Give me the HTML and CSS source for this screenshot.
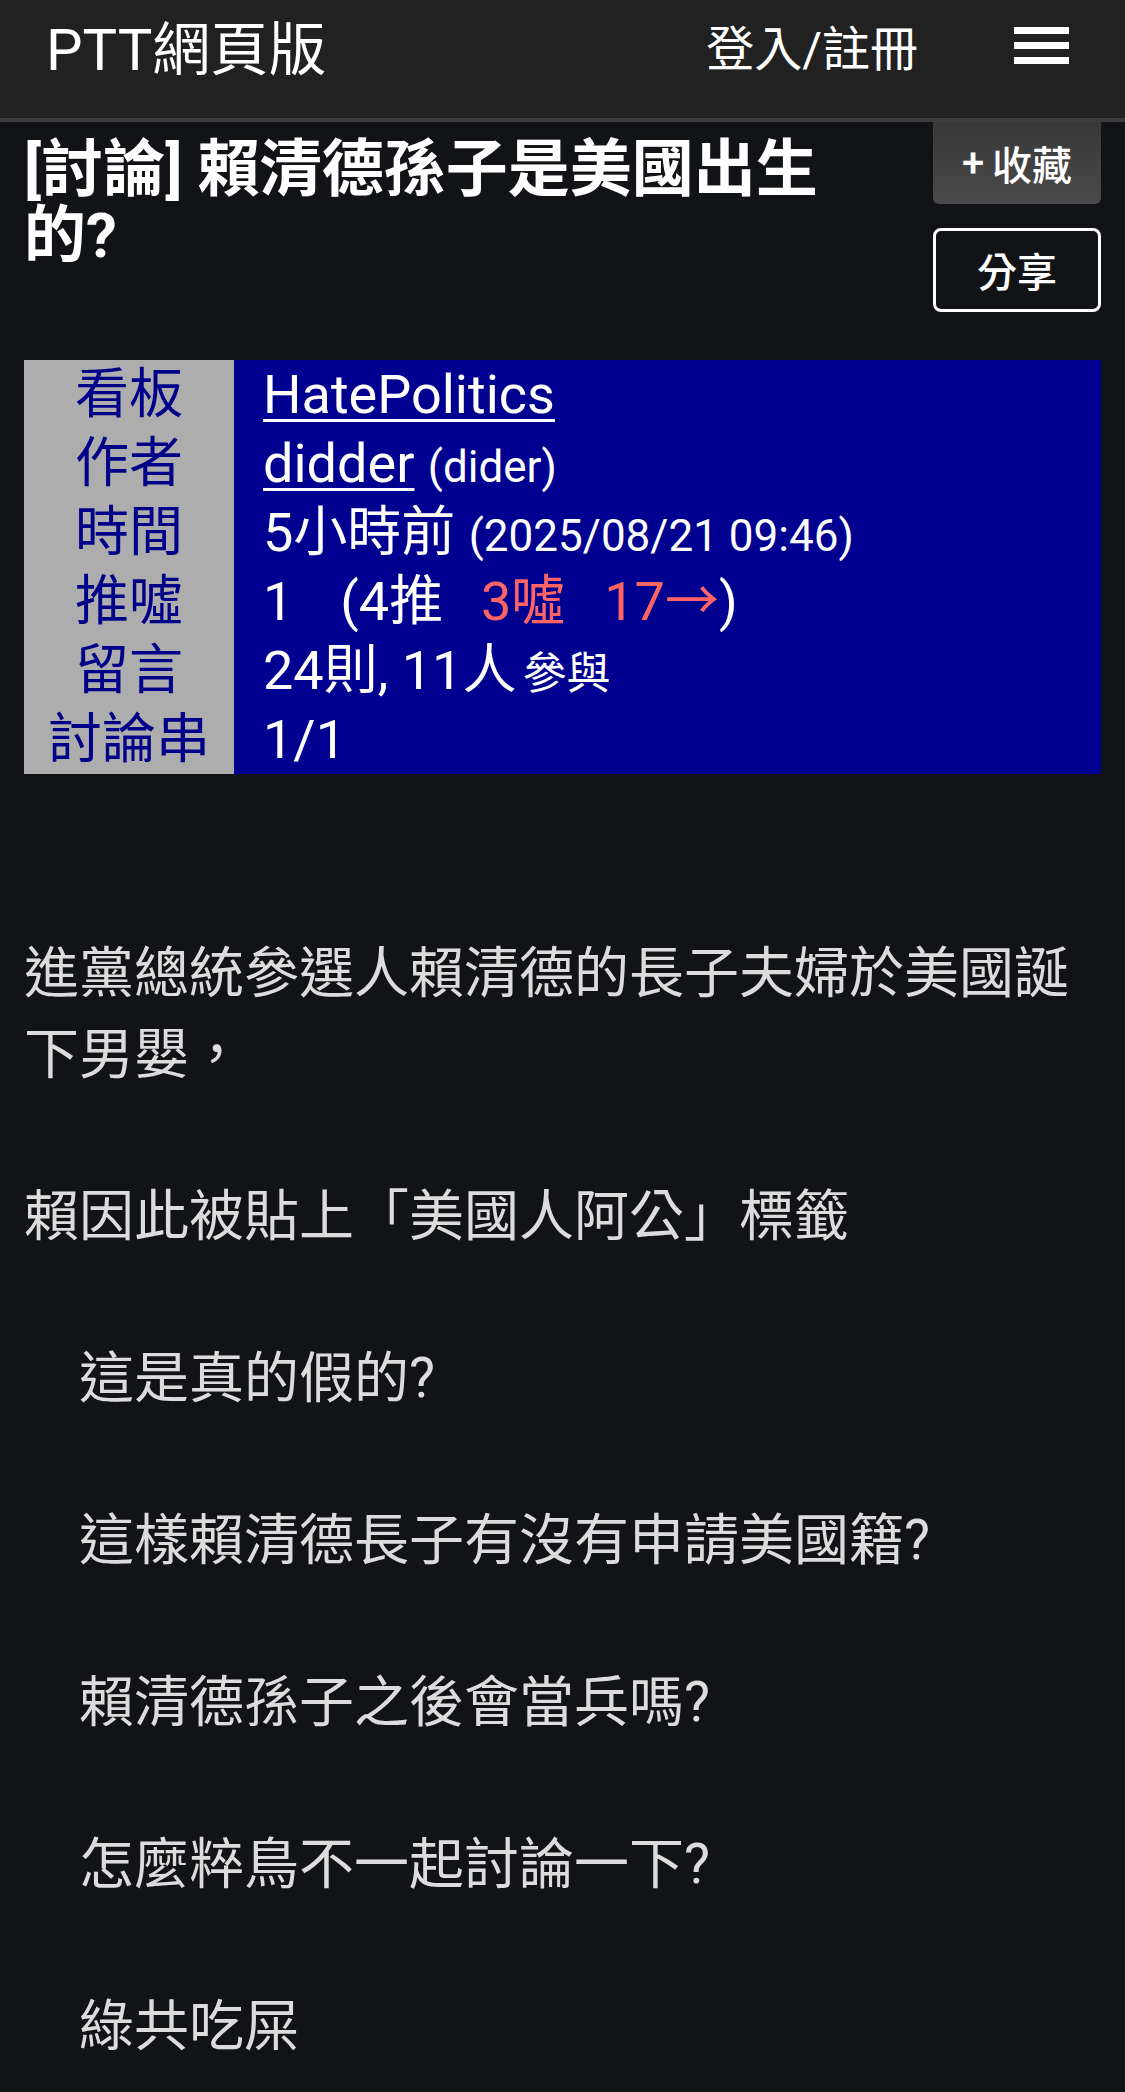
FILE: index.html
```html
<!DOCTYPE html>
<html lang="zh-Hant">
<head>
<meta charset="utf-8">
<title>PTT網頁版</title>
<link rel="stylesheet" href="styles.css">
</head>
<body>
<header class="topbar">
  <div class="brand">PTT網頁版</div>
  <div class="actions">
    <span class="login">登入/註冊</span>
    <svg class="menu" width="55" height="37" viewBox="0 0 55 37" aria-label="選單">
      <rect x="0" y="0" width="55" height="7" fill="#fff"/>
      <rect x="0" y="15" width="55" height="7" fill="#fff"/>
      <rect x="0" y="30" width="55" height="7" fill="#fff"/>
    </svg>
  </div>
</header>
<main class="page">
  <section class="article-head">
    <h1 class="title">[討論] 賴清德孫子是美國出生的?</h1>
    <div class="btns">
      <div class="btn fav"><span class="plus">+</span>收藏</div>
      <div class="btn share">分享</div>
    </div>
  </section>
  <div class="meta">
    <div class="label">看板</div>
    <div class="value"><span class="link">HatePolitics</span></div>
    <div class="label">作者</div>
    <div class="value"><span class="link">didder</span> <span class="small">(dider)</span></div>
    <div class="label">時間</div>
    <div class="value">5小時前 <span class="small">(2025/08/21 09:46)</span></div>
    <div class="label">推噓</div>
    <div class="value">1<span class="paren">(4推</span><span class="boo">3噓</span><span class="boo arrow">17→</span>)</div>
    <div class="label">留言</div>
    <div class="value">24則, 11人<span class="small join">參與</span></div>
    <div class="label">討論串</div>
    <div class="value">1/1</div>
  </div>
  <div class="content">進黨總統參選人賴清德的長子夫婦於美國誕下男嬰，

賴因此被貼上「美國人阿公」標籤

　這是真的假的?

　這樣賴清德長子有沒有申請美國籍?

　賴清德孫子之後會當兵嗎?

　怎麼粹鳥不一起討論一下?

　綠共吃屎</div>
</main>
</body>
</html>
```

FILE: styles.css
```css
* {
  box-sizing: border-box;
}

html, body {
  margin: 0;
  padding: 0;
}

body {
  background: #121316;
  color: #fff;
  font-family: Roboto, "Noto Sans CJK TC", "Noto Sans", sans-serif;
}

.topbar {
  height: 122px;
  background: #212121;
  border-bottom: 4px solid #3c3c3c;
  display: flex;
  align-items: center;
  justify-content: space-between;
  padding: 0 56px 18px 46px;
}

.brand {
  font-size: 58px;
  line-height: 58px;
  color: #fff;
}

.actions {
  display: flex;
  align-items: center;
  gap: 96px;
}

.login {
  font-size: 48px;
  line-height: 48px;
  color: #fff;
}

.menu {
  display: block;
  margin-bottom: 10px;
}

.page {
  padding: 0 24px;
}

.article-head {
  display: flex;
  align-items: flex-start;
  justify-content: space-between;
}

.title {
  flex: 0 0 850px;
  margin: 15px 0 0 0;
  font-size: 62px;
  line-height: 66px;
  font-weight: 700;
  color: #fff;
}

.btns {
  width: 168px;
  display: flex;
  flex-direction: column;
  gap: 24px;
}

.btn {
  display: flex;
  align-items: center;
  justify-content: center;
  font-size: 40px;
  font-weight: 500;
  color: #fff;
}

.plus {
  margin-right: 8px;
}

.fav {
  height: 82px;
  background: linear-gradient(#383838, #4a4a4a);
  border-radius: 0 0 6px 6px;
}

.share {
  height: 84px;
  border: 3px solid #fff;
  border-radius: 8px;
}

.meta {
  margin-top: 48px;
  display: grid;
  grid-template-columns: 210px 1fr;
  grid-auto-rows: 69px;
  font-size: 54px;
  line-height: 69px;
}

.label {
  background: #adadad;
  color: #000088;
  text-align: center;
  overflow: hidden;
}

.value {
  background: #000090;
  color: #fff;
  padding-left: 29px;
  white-space: nowrap;
  overflow: hidden;
}

.link {
  text-decoration: underline;
  text-decoration-thickness: 3px;
  text-underline-offset: 6px;
}

.small {
  font-size: 44px;
  line-height: 1;
}

.join {
  margin-left: 6px;
}

.paren {
  margin-left: 0.87em;
}

.boo {
  color: #ff6464;
  margin-left: 0.7em;
}

.boo.arrow {
  margin-left: 0.72em;
}

.content {
  margin-top: 159px;
  font-size: 55px;
  line-height: 81px;
  color: #dcdcdc;
  white-space: pre-wrap;
  padding-bottom: 40px;
}
```
